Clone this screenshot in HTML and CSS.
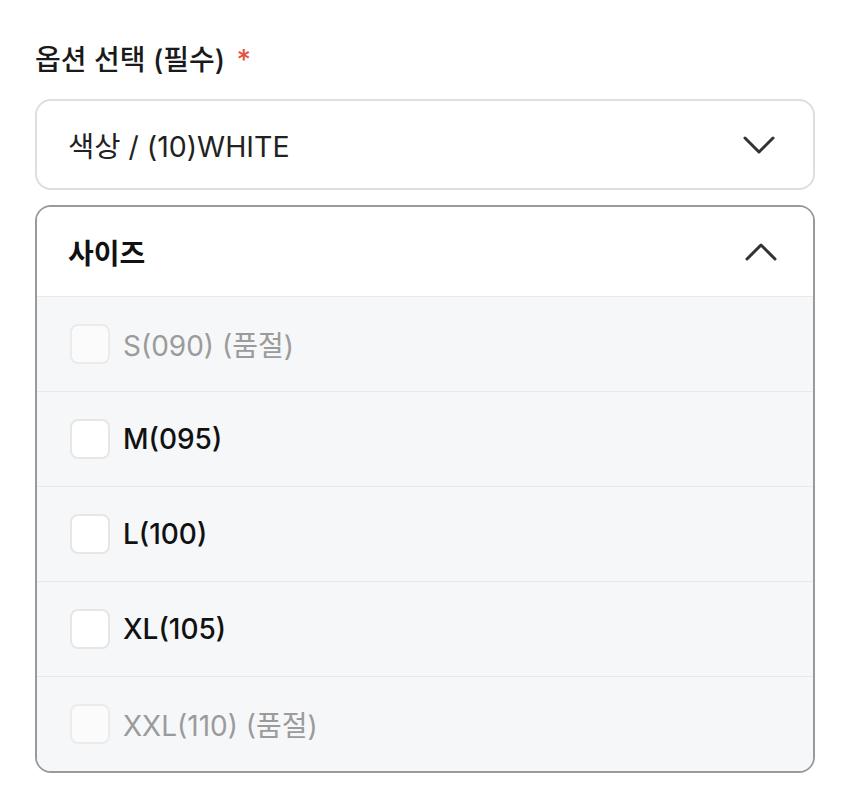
FILE: index.html
```html
<!DOCTYPE html>
<html lang="ko">
<head>
  <meta charset="UTF-8">
  <meta name="viewport" content="width=device-width, initial-scale=1.0">
  <title>옵션 선택</title>
  <link rel="stylesheet" href="styles.css">
</head>
<body>
  <div class="option-field">
    <div class="field-label">옵션 선택 (필수) <span class="required">*</span></div>

    <div class="select">
      <span>색상 / (10)WHITE</span>
      <svg class="chevron" viewBox="0 0 32 18"><polyline points="2,2 16,16 30,2"/></svg>
    </div>

    <div class="dropdown">
      <div class="dropdown-head">
        <span>사이즈</span>
        <svg class="chevron" viewBox="0 0 32 18"><polyline points="2,16 16,2 30,16"/></svg>
      </div>
      <label class="option soldout"><span class="check"></span>S(090) (품절)</label>
      <label class="option"><span class="check"></span>M(095)</label>
      <label class="option"><span class="check"></span>L(100)</label>
      <label class="option"><span class="check"></span>XL(105)</label>
      <label class="option soldout"><span class="check"></span>XXL(110) (품절)</label>
    </div>
  </div>
</body>
</html>
```

FILE: styles.css
```css
body {
  margin: 0;
  background: #fff;
  color: #111;
  font-family: Inter, "Noto Sans CJK KR", sans-serif;
}
.option-field {
  padding: 41px 35px 0;
}
.field-label {
  font-size: 28px;
  font-weight: 500;
  line-height: 38px;
  color: #1a1a1a;
  margin-bottom: 20px;
}
.required {
  color: #e5523f;
  margin-left: 4px;
}
.select {
  height: 91px;
  box-sizing: border-box;
  border: 2px solid #dedede;
  border-radius: 16px;
  display: flex;
  align-items: center;
  justify-content: space-between;
  padding: 0 38px 0 31px;
  font-size: 28.5px;
  color: #222;
}
.chevron {
  width: 32px;
  height: 18px;
  fill: none;
  stroke: #333;
  stroke-width: 3;
  stroke-linecap: round;
  stroke-linejoin: round;
}
.dropdown {
  margin-top: 15px;
  border: 2px solid #9a9a9a;
  border-radius: 16px;
  overflow: hidden;
}
.dropdown-head {
  height: 89px;
  display: flex;
  align-items: center;
  justify-content: space-between;
  padding: 0 36px 0 31px;
  font-size: 28px;
  font-weight: 700;
  background: #fff;
}
.option {
  height: 95px;
  box-sizing: border-box;
  display: flex;
  align-items: center;
  gap: 13px;
  padding-left: 33px;
  background: #f5f7f9;
  border-top: 1px solid #e7e9ec;
  font-size: 28px;
  font-weight: 500;
  color: #111;
}
.check {
  width: 40px;
  height: 40px;
  box-sizing: border-box;
  border: 2px solid #e6e6e6;
  border-radius: 8px;
  background: #fff;
}
.option.soldout {
  color: #9b9b9b;
  font-weight: 400;
}
.option.soldout .check {
  background: #fbfbfb;
  border-color: #ebebeb;
}
```
